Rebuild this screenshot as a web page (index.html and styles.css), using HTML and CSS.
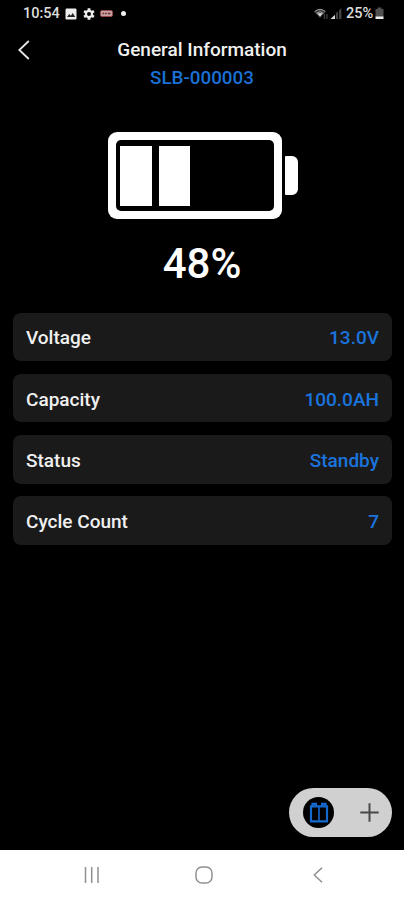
FILE: index.html
```html
<!DOCTYPE html>
<html lang="en">
<head>
    <meta charset="UTF-8">
    <meta name="viewport" content="width=device-width, initial-scale=1.0">
    <title>General Information</title>
    <link rel="stylesheet" href="styles.css">
</head>
<body>
    <div class="status-bar">
        <div class="status-left">
            <span class="time">10:54</span>
            <svg class="icon-picture" width="12" height="12" viewBox="0 0 12 12">
                <rect x="0.5" y="0.5" width="11" height="11" rx="1.2" fill="#eee"/>
                <path d="M2 9l2.3-3 1.5 1.8L7.8 5 10.2 9z" fill="#222"/>
            </svg>
            <svg class="icon-gear" width="12" height="12" viewBox="0 0 12 12">
                <circle cx="6" cy="6" r="3.1" fill="none" stroke="#eee" stroke-width="2.2"/>
                <path d="M6 0.3v2M6 9.7v2M1.1 3.1l1.7 1M9.2 7.9l1.7 1M1.1 8.9l1.7-1M9.2 4.1l1.7-1" stroke="#eee" stroke-width="2.8"/>
            </svg>
            <svg class="icon-badge" width="13" height="7" viewBox="0 0 13 7">
                <rect x="0.5" y="0.5" width="12" height="6" rx="1.5" fill="#c9a3a3" stroke="#93484b"/>
                <path d="M2.5 3.5h1.8M5.2 3.5h1.6M7.8 3.5h2.6" stroke="#64292c" stroke-width="1.6"/>
            </svg>
            <span class="dot"></span>
        </div>
        <div class="status-right">
            <svg width="15" height="12" viewBox="0 0 15 12">
                <path d="M0 3.5Q6-1.6 12 3.5L6 10z" fill="#444"/>
                <path d="M0.8 3.4Q6-0.8 11.2 3.4M2.5 5.2Q6 2.4 9.5 5.2" fill="none" stroke="#999" stroke-width="1"/>
                <path d="M3.2 5.2h5.6L6 8.6z" fill="#ddd"/>
                <path d="M10.5 6v5M13 6v5" stroke="#3a3a3a" stroke-width="1.4"/>
            </svg>
            <svg width="12" height="12" viewBox="0 0 12 12">
                <path d="M0.5 11L5 6.8V11z" fill="#ddd"/>
                <path d="M6 11V5l2-1.8V11zM9 11V2.3l2.4-2V11z" fill="#444"/>
            </svg>
            <span class="charge">25%</span>
            <svg width="9" height="13" viewBox="0 0 9 13">
                <path d="M0.5 2H2.5V0.5h4V2h2v8h-8z" fill="#505050"/>
                <rect x="0.5" y="9.5" width="8" height="2.5" fill="#eee"/>
            </svg>
        </div>
    </div>

    <div class="header">
        <svg class="back" width="12" height="20" viewBox="0 0 12 20">
            <path d="M10.8 1L1.3 10l9.5 9" fill="none" stroke="#e8e8e8" stroke-width="1.8"/>
        </svg>
        <div class="title">General Information</div>
        <div class="serial">SLB-000003</div>
    </div>

    <div class="battery">
        <div class="battery-body">
            <div class="battery-cells">
                <div class="cell"></div>
                <div class="cell"></div>
            </div>
        </div>
        <div class="battery-tip"></div>
    </div>
    <div class="percent">48%</div>

    <div class="list">
        <div class="row"><span>Voltage</span><span class="value">13.0V</span></div>
        <div class="row"><span>Capacity</span><span class="value">100.0AH</span></div>
        <div class="row"><span>Status</span><span class="value">Standby</span></div>
        <div class="row"><span>Cycle Count</span><span class="value">7</span></div>
    </div>

    <div class="switcher">
        <div class="switcher-active">
            <svg width="20" height="22" viewBox="0 0 20 22">
                <path d="M2 4.3h16v15H2zM3.5 4V1.8h3.4V4M13.1 4V1.8h3.4V4" fill="none" stroke="#1669cc" stroke-width="2.2"/>
                <path d="M10 4.5v14.5" stroke="#1669cc" stroke-width="1.6"/>
            </svg>
        </div>
        <svg width="19" height="19" viewBox="0 0 19 19">
            <path d="M9.5 0.3v18.4M0.3 9.5h18.4" stroke="#484848" stroke-width="2"/>
        </svg>
    </div>

    <div class="nav-bar">
        <svg width="16" height="16" viewBox="0 0 16 16">
            <path d="M1.5 0v16M7.7 0v16M14 0v16" stroke="#909090" stroke-width="1.5"/>
        </svg>
        <svg class="home" width="18" height="18" viewBox="0 0 18 18">
            <rect x="1" y="1" width="16" height="16" rx="6" fill="none" stroke="#909090" stroke-width="1.5"/>
        </svg>
        <svg width="10" height="16" viewBox="0 0 10 16">
            <path d="M9 0.7L1.3 8 9 15.3" fill="none" stroke="#909090" stroke-width="1.5"/>
        </svg>
    </div>
</body>
</html>
```
FILE: styles.css
```css
* {
    box-sizing: border-box;
}

body {
    display: flex;
    flex-direction: column;
    height: 900px;
    margin: 0;
    background-color: #000;
    color: #f0f0f0;
    font-family: Roboto, sans-serif;
    font-weight: 500;
    overflow: hidden;
}

svg {
    display: block;
    flex: none;
}

.status-bar {
    display: flex;
    justify-content: space-between;
    height: 27px;
    padding: 0 20px 0 23px;
    font-size: 14.5px;
    color: #ddd;
}

.status-left,
.status-right {
    display: flex;
    align-items: center;
}

.time {
    width: 42px;
    font-size: 14.5px;
}

.icon-gear {
    margin-left: 6px;
}

.icon-badge {
    margin-left: 5px;
}

.dot {
    width: 5px;
    height: 5px;
    margin-left: 8px;
    border-radius: 50%;
    background-color: #eee;
}

.status-right svg:nth-child(2) {
    margin: 0 4px 0 1px;
}

.charge {
    width: 29px;
}

.header {
    display: grid;
    grid-template-columns: 42px 1fr 42px;
    align-items: center;
    height: 65px;
    padding-top: 9px;
    text-align: center;
    line-height: 28px;
}

.back {
    margin-left: 18px;
}

.title {
    font-size: 19px;
}

.serial {
    grid-column: 2;
    color: #1a70d6;
    font-size: 18.8px;
}

.battery {
    display: flex;
    align-items: center;
    gap: 3px;
    margin: 40px 0 0 107.5px;
    height: 87px;
}

.battery-body {
    width: 174px;
    height: 87px;
    padding: 8px;
    border-radius: 9px;
    background-color: #fff;
}

.battery-cells {
    display: flex;
    gap: 7px;
    height: 71px;
    padding: 6px 4.5px;
    border-radius: 5px;
    background-color: #000;
}

.cell {
    width: 31.5px;
    height: 60px;
    background-color: #fff;
}

.battery-tip {
    width: 13.5px;
    height: 39px;
    border-radius: 1px 6px 6px 1px;
    background-color: #fff;
}

.percent {
    height: 93.5px;
    padding-top: 20px;
    color: #fff;
    font-size: 42px;
    line-height: 50px;
    text-align: center;
}

.list {
    display: flex;
    flex-direction: column;
    gap: 12.5px;
    padding: 0 12px 0 13px;
}

.row {
    display: flex;
    align-items: center;
    justify-content: space-between;
    height: 48.7px;
    padding: 2px 13px 0;
    border-radius: 8px;
    background-color: #1a1a1a;
    font-size: 19px;
}

.value {
    color: #1b74de;
}

.switcher {
    display: flex;
    align-items: center;
    justify-content: space-between;
    width: 103px;
    height: 49px;
    margin: auto 12px 12.5px auto;
    padding: 0 13px 0 14px;
    border-radius: 25px;
    background-color: #d0d0d0;
}

.switcher-active {
    display: flex;
    align-items: center;
    justify-content: center;
    width: 31px;
    height: 31px;
    border-radius: 50%;
    background-color: #000;
}

.nav-bar {
    display: flex;
    align-items: center;
    justify-content: space-between;
    height: 50.5px;
    padding: 0 81px 0 84px;
    background-color: #fff;
}

.home {
    margin-right: 5px;
}
```
